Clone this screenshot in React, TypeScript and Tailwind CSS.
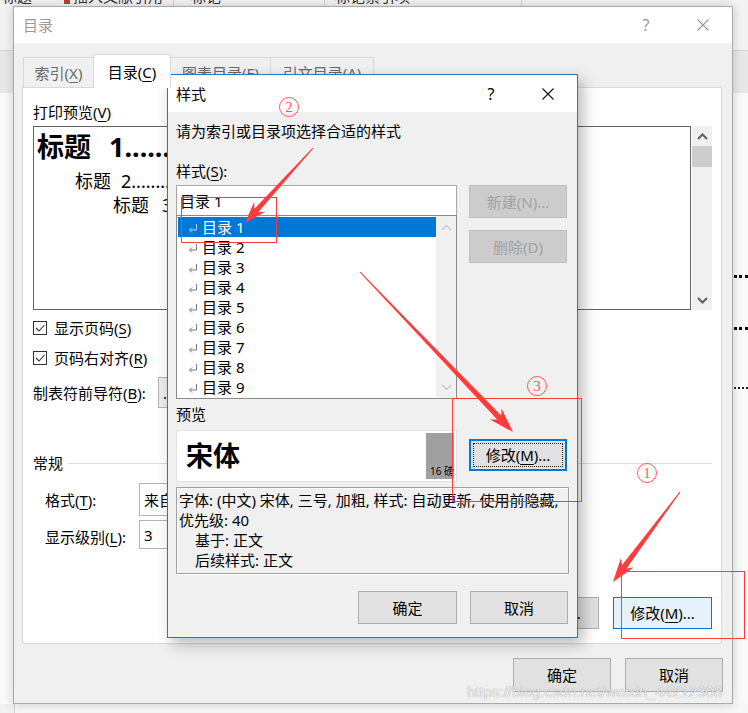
import React from 'react';

type Pt = [number, number];

// red annotation arrow: thin tail, widening shaft, notched head
function arrowPoints(x1: number, y1: number, x2: number, y2: number, headL = 22, headW = 8, neckW = 2.6, tailW = 0.6) {
  const dx = x2 - x1;
  const dy = y2 - y1;
  const len = Math.hypot(dx, dy);
  const ux = dx / len;
  const uy = dy / len;
  const nx = -uy;
  const ny = ux;
  const bx = x2 - ux * headL;
  const by = y2 - uy * headL;
  const pts: Pt[] = [
    [x1 + nx * tailW, y1 + ny * tailW],
    [bx + ux * 5 + nx * neckW, by + uy * 5 + ny * neckW],
    [bx + nx * headW, by + ny * headW],
    [x2, y2],
    [bx - nx * headW, by - ny * headW],
    [bx + ux * 5 - nx * neckW, by + uy * 5 - ny * neckW],
    [x1 - nx * tailW, y1 - ny * tailW],
  ];
  return pts.map((p) => p.map((v) => v.toFixed(1)).join(',')).join(' ');
}

const U = ({ children }: { children: React.ReactNode }) => (
  <span className="underline underline-offset-[3px] decoration-1">{children}</span>
);

const CloseIcon = ({ color }: { color: string }) => (
  <svg width="12" height="12" viewBox="0 0 12 12">
    <path d="M0.5 0.5 L11.5 11.5 M11.5 0.5 L0.5 11.5" stroke={color} strokeWidth="1.1" fill="none" />
  </svg>
);

const Chevron = ({ up, color, width = 1.6 }: { up?: boolean; color: string; width?: number }) => (
  <svg width="11" height="7" viewBox="0 0 11 7">
    <polyline
      points={up ? '1,6 5.5,1.5 10,6' : '1,1 5.5,5.5 10,1'}
      stroke={color}
      strokeWidth={width}
      fill="none"
    />
  </svg>
);

const Check = () => (
  <div className="w-[14px] h-[14px] border border-[#333333] bg-white flex items-center justify-center">
    <svg width="12" height="12" viewBox="0 0 12 12">
      <polyline points="2,6 5,9 10.5,3" stroke="#333333" strokeWidth="1.1" fill="none" />
    </svg>
  </div>
);

const ReturnMark = ({ color }: { color: string }) => (
  <svg width="10" height="10" viewBox="0 0 10 10">
    <path d="M8.5 1 V7 H1.5 M4 4.5 L1.5 7 L4 9.5" stroke={color} strokeWidth="1" fill="none" />
  </svg>
);

const DOTS = '..............................................................';

function Backdrop() {
  return (
    <div className="flex flex-col h-full">
      <div className="h-[51px] border-b border-[#d4d4d4] bg-[#f3f3f3] flex items-start text-[#333333] overflow-hidden">
        <span className="-mt-[14px] w-[64px] pl-[2px]">标题</span>
        <span className="-mt-[14px] w-[109px] flex items-end gap-[3px]">
          <span className="w-[6px] h-[6px] bg-[#c43b2f] mb-[2px]" />
          插入文献引用
        </span>
        <span className="h-full border-l border-[#d6d6d6] -mt-[14px] w-[151px] pl-[17px]">标记</span>
        <span className="h-full border-l border-[#d6d6d6] -mt-[14px] w-[197px] pl-[10px]">标记索引项</span>
        <span className="h-full border-l border-[#d6d6d6]" />
      </div>
      <div className="h-[42px] bg-[#e8e8e8]" />
      <div className="flex-1 bg-[#fafafa] flex flex-col items-end">
        <div className="mt-[182px] w-[14px] border-t-[3px] border-dotted border-black" />
        <div className="mt-[49px] w-[14px] border-t-[3px] border-dotted border-black" />
        <div className="mt-[57px] w-[14px] border-t-2 border-dotted border-[#222222]" />
        <div className="flex-1" />
        <div className="h-[9px] w-full bg-[#f0f0f0] flex">
          <div className="w-[15px] border-r border-[#cfcfcf]" />
          <div className="flex-1 bg-[#f7f7f7]" />
        </div>
      </div>
    </div>
  );
}

function TocDialog() {
  const tab = 'h-[30px] px-[10px] flex items-center justify-center border border-b-0 border-[#d9d9d9] bg-[#f0f0f0] text-[#6a6a6a] -ml-px';
  const btn = 'flex items-center justify-center bg-[#e1e1e1] border border-[#adadad]';
  return (
    <div className="absolute left-[13px] top-[6px] w-[720px] h-[698px] border border-[#a9a9a9] bg-[#f0f0f0] flex flex-col shadow-[0_0_10px_rgba(0,0,0,0.18)]">
      <div className="h-[36px] bg-white flex items-center pl-[9px] text-[#9a9a9a]">
        <span>目录</span>
        <span className="ml-auto w-[30px] text-center text-[16px] text-[#9a9a9a]">?</span>
        <span className="ml-[27px] w-[30px] mr-[14px] flex justify-center">
          <CloseIcon color="#9a9a9a" />
        </span>
      </div>
      <div className="flex-1 flex flex-col">
        <div className="pt-[11px] pl-[9px] flex items-end">
          <div className={`${tab} w-[71px] ml-0`}>
            索引(<U>X</U>)
          </div>
          <div className="h-[34px] -mb-px -ml-px w-[78px] relative z-10 flex items-center justify-center border border-b-0 border-[#d9d9d9] bg-white text-black">
            目录(<U>C</U>)
          </div>
          <div className={`${tab} w-[101px]`}>
            图表目录(<U>F</U>)
          </div>
          <div className={`${tab} w-[104px]`}>
            引文目录(<U>A</U>)
          </div>
        </div>
        <div className="flex-1 ml-[8px] mr-[10px] bg-white border border-[#d9d9d9] flex flex-col pl-[10px] pr-[9px] pt-[14px]">
          <div className="h-[20px]">
            打印预览(<U>V</U>)
          </div>
          <div className="mt-[4px] h-[184px] flex">
            <div className="flex-1 border border-[#646464] bg-white pt-[2px]">
              <div className="w-[500px] overflow-hidden whitespace-nowrap">
                <div className="h-[36px] leading-[36px] text-[27px] font-bold pl-[3px]">
                  标题<span className="ml-[18px]">1{DOTS}</span>
                </div>
                <div className="mt-[4px] h-[24px] leading-[24px] text-[18px] pl-[41px]">
                  标题<span className="ml-[10px]">2{DOTS}</span>
                </div>
                <div className="h-[24px] leading-[24px] text-[18px] pl-[79px]">
                  标题<span className="ml-[13px]">3{DOTS}</span>
                </div>
              </div>
            </div>
            <div className="w-[20px] ml-px bg-[#f0f0f0] flex flex-col">
              <div className="h-[20px] flex items-center justify-center">
                <Chevron up color="#606060" width={2} />
              </div>
              <div className="h-[21px] bg-[#cdcdcd]" />
              <div className="flex-1" />
              <div className="h-[20px] flex items-center justify-center">
                <Chevron color="#606060" width={2} />
              </div>
            </div>
          </div>
          <div className="mt-[3px] h-[30px] flex items-center gap-[7px]">
            <Check />
            <span>
              显示页码(<U>S</U>)
            </span>
          </div>
          <div className="h-[30px] flex items-center gap-[7px]">
            <Check />
            <span>
              页码右对齐(<U>R</U>)
            </span>
          </div>
          <div className="mt-[4px] h-[31px] flex items-center">
            <span className="w-[125px]">
              制表符前导符(<U>B</U>):
            </span>
            <div className="w-[150px] h-full border border-[#b4b4b4] bg-[#ececec] flex items-center pl-[4px]">
              ......
            </div>
          </div>
          <div className="mt-[45px] h-[20px] flex items-center">
            <span>常规</span>
            <div className="flex-1 h-px bg-[#dcdcdc] ml-[5px]" />
          </div>
          <div className="mt-[10px] h-[33px] flex items-center pl-[12px]">
            <span className="w-[94px]">
              格式(<U>T</U>):
            </span>
            <div className="w-[200px] h-full border border-[#b4b4b4] bg-white flex items-center pl-[4px]">
              来自模板
            </div>
          </div>
          <div className="mt-[4px] h-[29px] flex items-center pl-[12px]">
            <span className="w-[94px] pt-[4px]">
              显示级别(<U>L</U>):
            </span>
            <div className="w-[60px] h-full border border-[#b4b4b4] bg-white flex items-center pl-[4px]">
              3
            </div>
          </div>
          <div className="mt-[48px] h-[32px] flex justify-end gap-[14px]">
            <div className={`${btn} w-[99px]`}>
              选项(<U>O</U>)...
            </div>
            <div className="w-[99px] flex items-center justify-center bg-[#e5f1fb] border border-[#0078d7]">
              修改(<U>M</U>)...
            </div>
          </div>
        </div>
        <div className="mt-[14px] pr-[9px] pb-[11px] flex justify-end gap-[14px]">
          <div className={`${btn} w-[98px] h-[34px]`}>确定</div>
          <div className={`${btn} w-[98px] h-[34px]`}>取消</div>
        </div>
      </div>
    </div>
  );
}

function StyleDialog() {
  const items = [1, 2, 3, 4, 5, 6, 7, 8, 9];
  const btn = 'flex items-center justify-center bg-[#e1e1e1] border border-[#adadad]';
  return (
    <div className="absolute left-[167px] top-[74px] w-[411px] h-[564px] border border-[#1b7bd0] bg-[#f0f0f0] flex flex-col shadow-[5px_6px_14px_rgba(0,0,0,0.28)]">
      <div className="h-[37px] bg-white flex items-center pl-[8px]">
        <span>样式</span>
        <span className="ml-auto w-[30px] text-center text-[16px]">?</span>
        <span className="ml-[27px] w-[30px] mr-[14px] flex justify-center">
          <CloseIcon color="#111111" />
        </span>
      </div>
      <div className="flex-1 flex flex-col pl-[8px] pr-[8px] pt-[9px]">
        <div className="h-[20px] whitespace-nowrap">请为索引或目录项选择合适的样式</div>
        <div className="mt-[20px] h-[20px]">
          样式(<U>S</U>):
        </div>
        <div className="mt-[4px] flex">
          <div className="w-[281px] flex flex-col">
            <div className="h-[30px] border border-b-0 border-[#a6a6a6] bg-white flex items-center pl-[3px]">
              目录 1
            </div>
            <div className="h-[184px] border border-[#8a8a8a] bg-white flex pt-px">
              <div className="flex-1 flex flex-col pl-px">
                {items.map((n) => (
                  <div
                    key={n}
                    className={`h-[20px] flex items-center pl-[10px] ${
                      n === 1 ? 'bg-[#0078d7] text-white' : 'text-black'
                    }`}
                  >
                    <span className="w-[14px] flex pt-[2px]">
                      <ReturnMark color={n === 1 ? '#bcd3ee' : '#7a7a7a'} />
                    </span>
                    <span>目录 {n}</span>
                  </div>
                ))}
              </div>
              <div className="w-[20px] -mt-px bg-[#f0f0f0] flex flex-col justify-between">
                <div className="h-[22px] flex items-center justify-center">
                  <Chevron up color="#c4c4c4" width={1.2} />
                </div>
                <div className="h-[22px] flex items-center justify-center">
                  <Chevron color="#c4c4c4" width={1.2} />
                </div>
              </div>
            </div>
          </div>
          <div className="ml-[12px] flex flex-col gap-[12px]">
            <div className="w-[98px] h-[33px] flex items-center justify-center bg-[#cccccc] border border-[#bfbfbf] text-[#a3a3a3]">
              新建(N)...
            </div>
            <div className="w-[98px] h-[33px] flex items-center justify-center bg-[#cccccc] border border-[#bfbfbf] text-[#a3a3a3]">
              删除(D)
            </div>
          </div>
        </div>
        <div className="mt-[5px] h-[20px]">预览</div>
        <div className="mt-[6px] flex">
          <div className="w-[281px] h-[52px] bg-white border border-[#e2e2e2] p-[2px] flex">
            <div className="flex-1 flex items-center pl-[7px] text-[27px] leading-[30px] font-semibold">宋体</div>
            <div className="w-[28px] bg-[#a0a0a0] flex items-end justify-end pb-[1px] text-[10px] leading-[13px] whitespace-nowrap overflow-hidden">
              16 磅
            </div>
          </div>
          <div className="ml-[12px] mt-[9px] w-[98px] h-[32px] border-2 border-[#0078d7] bg-[#e1e1e1] p-[2px]">
            <div className="h-full border border-dotted border-[#222222] flex items-center justify-center">
              修改(<U>M</U>)...
            </div>
          </div>
        </div>
        <div className="mt-[5px] w-[393px] h-[87px] border border-[#a0a0a0] pl-[2px] pt-[2px] whitespace-nowrap shadow-[1px_1px_0_#ffffff,inset_1px_1px_0_#ffffff]">
          <div className="h-[20px]">字体: (中文) 宋体, 三号, 加粗, 样式: 自动更新, 使用前隐藏,</div>
          <div className="h-[20px]">优先级: 40</div>
          <div className="h-[20px] pl-[16px]">基于: 正文</div>
          <div className="h-[20px] pl-[16px]">后续样式: 正文</div>
        </div>
        <div className="mt-[17px] flex justify-end gap-[13px] pr-[1px]">
          <div className={`${btn} w-[99px] h-[33px]`}>确定</div>
          <div className={`${btn} w-[98px] h-[33px]`}>取消</div>
        </div>
      </div>
    </div>
  );
}

function Circled({ n, className }: { n: string; className: string }) {
  return (
    <span
      className={`absolute w-[20px] h-[20px] rounded-full border border-[#ff5a5a] text-[#ff5a5a] flex items-center justify-center text-[15px] leading-none font-['Liberation_Serif',serif] ${className}`}
    >
      {n}
    </span>
  );
}

function Annotations() {
  const red = '#ff3b3b';
  return (
    <div className="absolute inset-0 pointer-events-none">
      <svg className="absolute inset-0" width="748" height="713" viewBox="0 0 748 713">
        <rect x="181.5" y="197.5" width="95" height="45" fill="none" stroke={red} />
        <rect x="452.5" y="398.5" width="129" height="103" fill="none" stroke={red} />
        <rect x="621.5" y="571.5" width="123" height="67" fill="none" stroke={red} />
        <polygon points={arrowPoints(313, 148, 245, 223, 22, 7.5, 2.6, 0.5)} fill={red} />
        <polygon points={arrowPoints(360, 272, 513, 432, 25, 8, 2.8, 0.5)} fill={red} />
        <polygon points={arrowPoints(680, 492, 613, 582, 24, 8, 2.8, 0.5)} fill={red} />
      </svg>
      <Circled n="2" className="left-[279px] top-[97px]" />
      <Circled n="3" className="left-[527px] top-[376px]" />
      <Circled n="1" className="left-[637px] top-[463px]" />
      <span className="absolute left-[467px] top-[682px] text-[15px] leading-[20px] font-['Liberation_Sans',sans-serif] text-white/80 [text-shadow:0_0_1px_rgba(0,0,0,0.45)] whitespace-nowrap">
        https://blog.csdn.net/weixin_44212308
      </span>
    </div>
  );
}

export default function App() {
  return (
    <div className="relative w-[748px] h-[713px] overflow-hidden bg-[#f3f3f3] text-[15px] leading-[20px] text-black font-['Noto_Sans','Noto_Sans_CJK_SC',sans-serif]">
      <Backdrop />
      <TocDialog />
      <StyleDialog />
      <Annotations />
    </div>
  );
}
